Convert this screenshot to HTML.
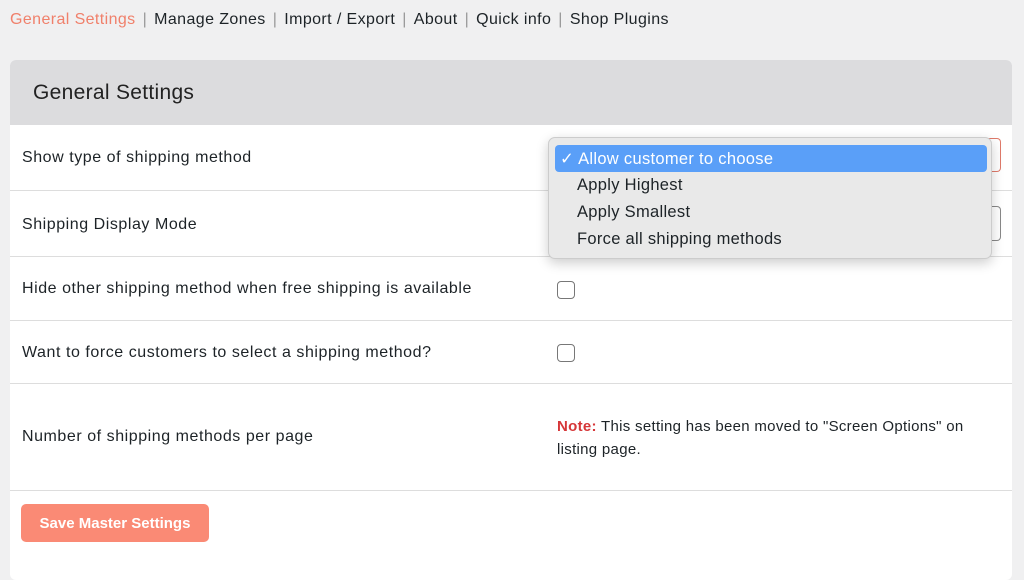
<!DOCTYPE html>
<html><head><style>
*{margin:0;padding:0;box-sizing:border-box}
body{width:1024px;height:549px;overflow:hidden;background:#f0f0f1;font-family:"Liberation Sans",sans-serif;color:#1d2327;position:relative}
.nav{position:absolute;top:11px;left:10px;font-size:16px;letter-spacing:.4px;white-space:nowrap}
.nav span{margin-right:3px}
.nav .sep{color:#999;margin:0 7px 0 4px}
.card{position:absolute;left:10px;top:60px;width:1002px;height:520px;background:#fff;border-radius:6px;overflow:hidden}
.hd{height:65px;background:#dcdcde;font-size:21px;letter-spacing:.3px;padding:21px 0 0 23px;color:#222}
.row{position:absolute;left:0;width:1002px;border-top:1px solid #ddd;font-size:16px;letter-spacing:.55px}
.row .l{position:absolute;left:12px}
.cb{position:absolute;left:547px;width:18px;height:18px;border:1.5px solid #777;border-radius:4px}
.menu{position:absolute;left:548px;top:137px;width:444px;height:122px;background:#e9e9e9;border:1px solid #ccc;border-radius:7px;box-shadow:0 4px 12px rgba(0,0,0,.2);font-size:16.5px;letter-spacing:.3px}
.menu div{position:absolute;left:28px}
.sel{position:absolute;left:6px!important;top:7px;width:432px;height:27px;background:#5a9ff8;border-radius:4px;color:#fff;padding:4px 0 0 5px}
.btn{position:absolute;left:21px;top:504px;width:188px;height:38px;background:#fa8a75;border-radius:5px;color:#fff;font-size:15px;font-weight:bold;text-align:center;line-height:40px}
</style></head><body>
<div class="nav"><span style="color:#f0806b">General Settings</span><span class="sep">|</span><span>Manage Zones</span><span class="sep">|</span><span>Import / Export</span><span class="sep">|</span><span>About</span><span class="sep">|</span><span>Quick info</span><span class="sep">|</span><span>Shop Plugins</span></div>
<div class="card">
<div class="hd">General Settings</div>
<div class="row" style="top:65px;height:65px;border-top:none"><span class="l" style="top:24px">Show type of shipping method</span><div style="position:absolute;left:960px;top:13px;width:31px;height:34px;border:1px solid #e07a6a;border-left:none;border-radius:0 4px 4px 0"></div></div>
<div class="row" style="top:130px;height:66px"><span class="l" style="top:25px">Shipping Display Mode</span><div style="position:absolute;left:960px;top:15px;width:31px;height:35px;border:1px solid #888;border-left:none;border-radius:0 4px 4px 0"></div></div>
<div class="row" style="top:196px;height:64px"><span class="l" style="top:23px">Hide other shipping method when free shipping is available</span><div class="cb" style="top:24px"></div></div>
<div class="row" style="top:260px;height:63px"><span class="l" style="top:23px">Want to force customers to select a shipping method?</span><div class="cb" style="top:23px"></div></div>
<div class="row" style="top:323px;height:107px"><span class="l" style="top:44px">Number of shipping methods per page</span><div style="position:absolute;left:547px;top:31px;font-size:15px;letter-spacing:.3px;line-height:23px;width:440px"><b style="color:#d63638">Note:</b> This setting has been moved to "Screen Options" on listing page.</div></div>
<div class="row" style="top:430px;height:100px"></div>
</div>
<div class="btn">Save Master Settings</div>
<div class="menu">
<div class="sel">✓ Allow customer to choose</div>
<div style="top:38px">Apply Highest</div>
<div style="top:65px">Apply Smallest</div>
<div style="top:92px">Force all shipping methods</div>
</div>
</body></html>
